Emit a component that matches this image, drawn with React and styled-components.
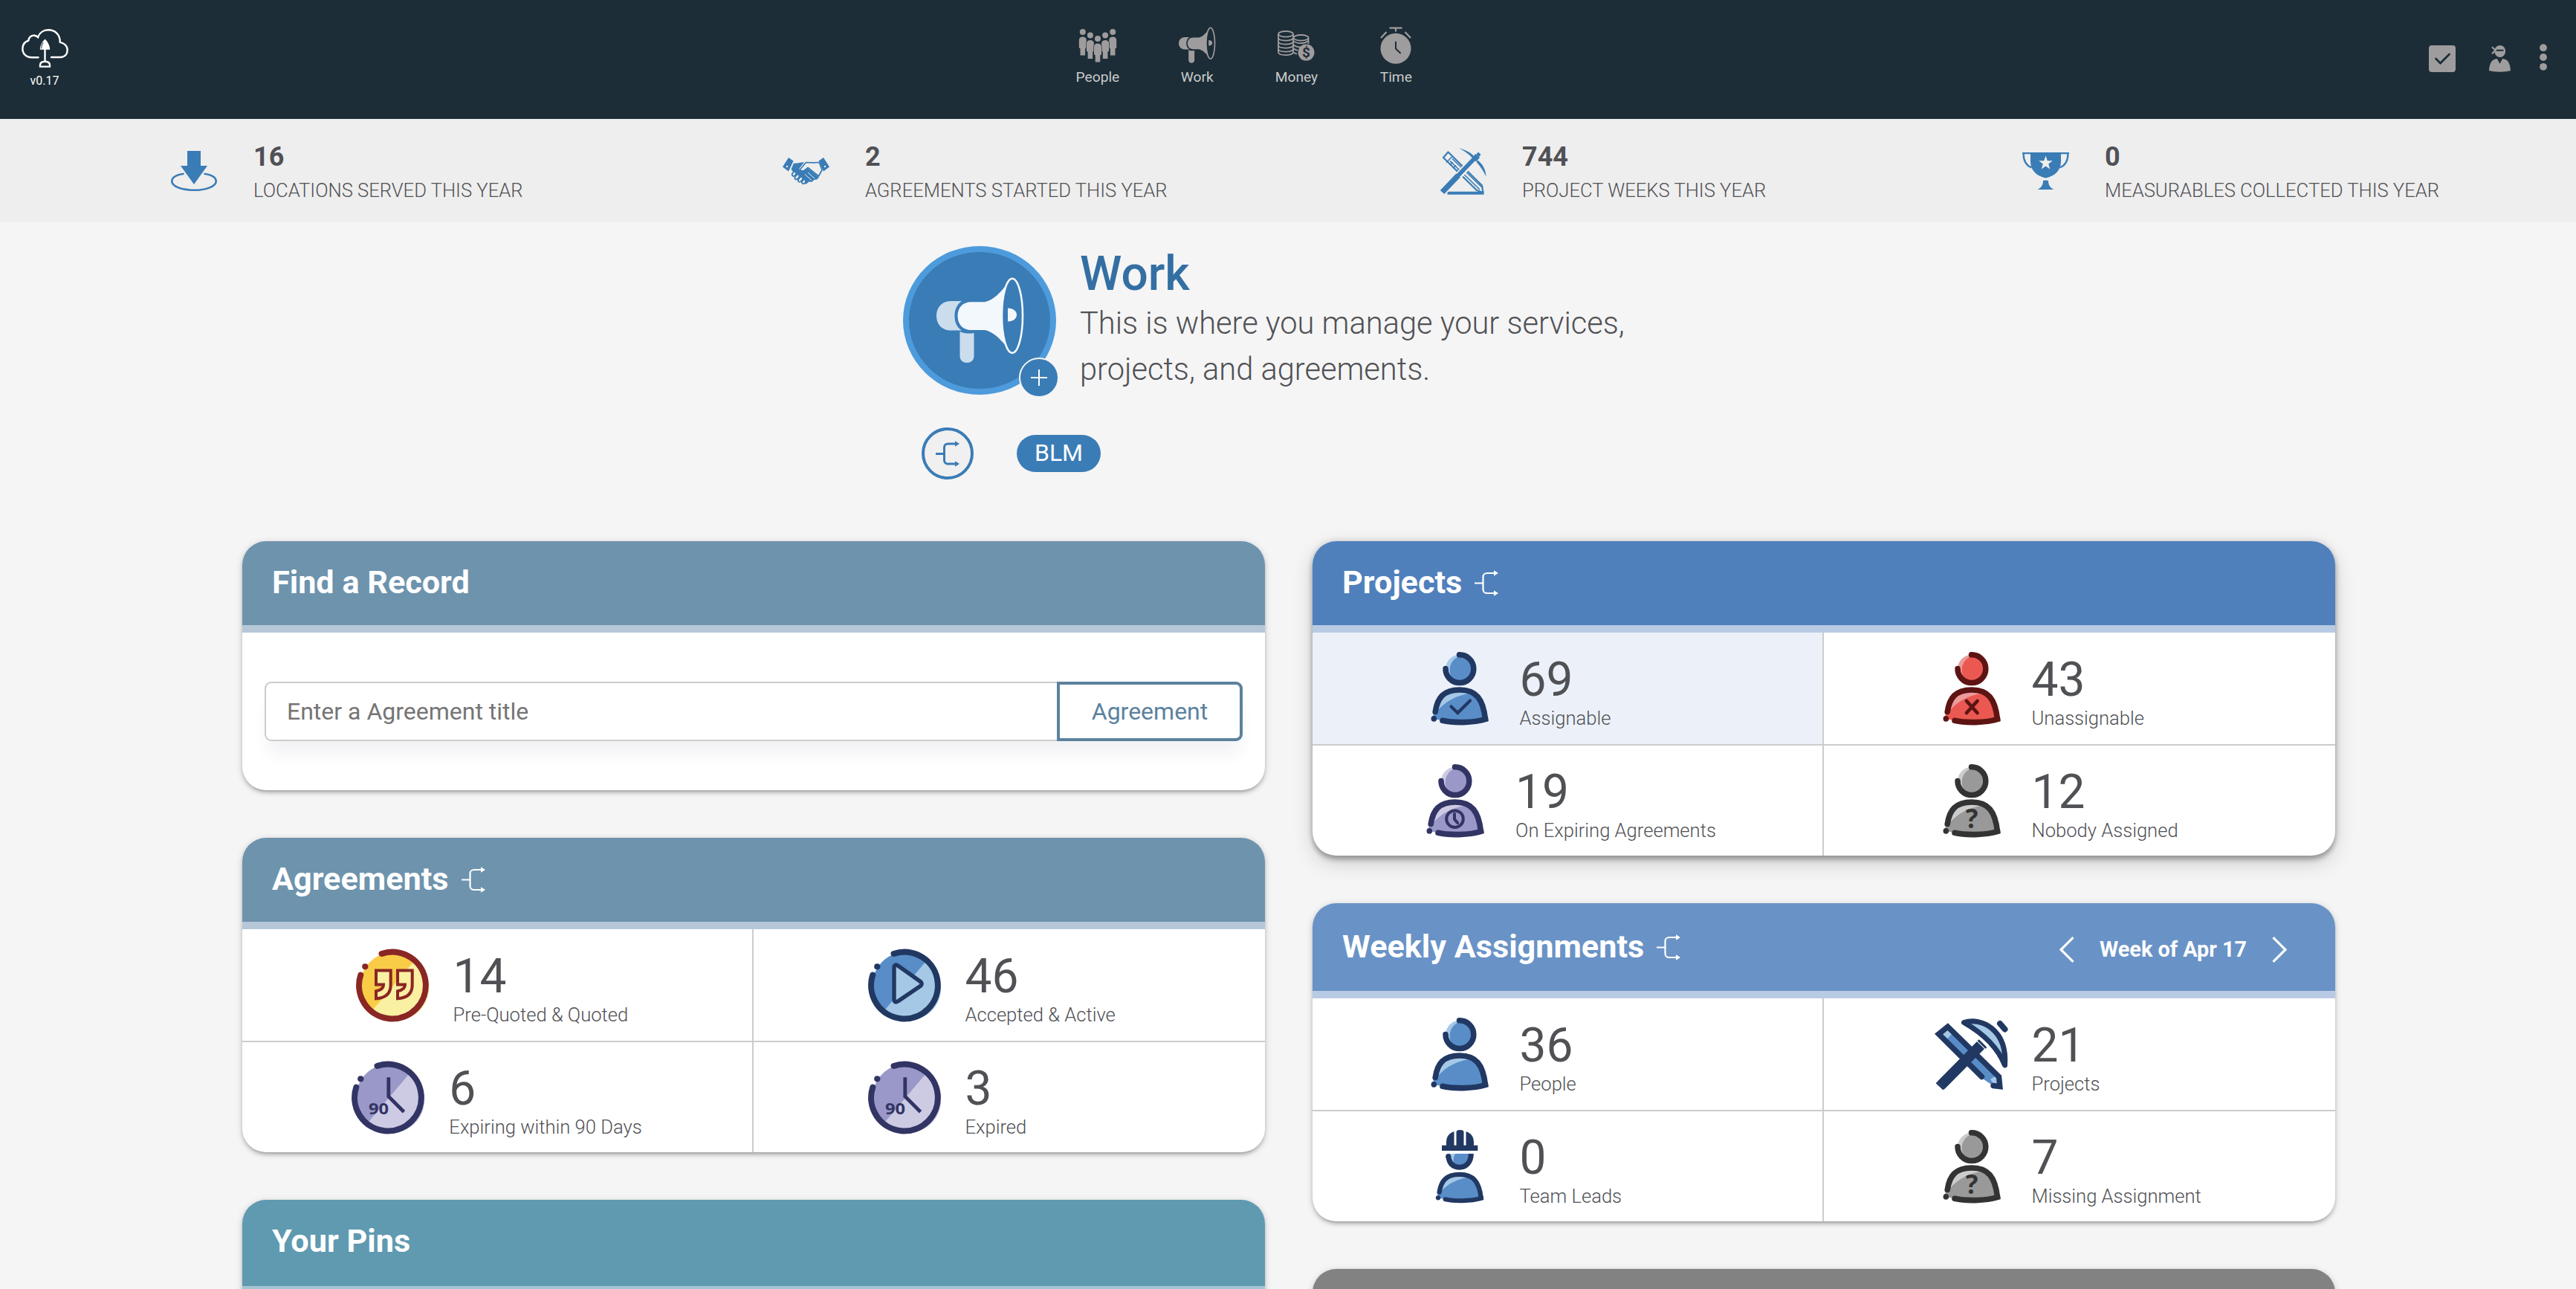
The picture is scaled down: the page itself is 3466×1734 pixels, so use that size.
import React from "react";
import styled, { createGlobalStyle } from "styled-components";

const GlobalStyle = createGlobalStyle`
  *, *::before, *::after { box-sizing: border-box; }
  html, body { margin: 0; padding: 0; background: #f5f5f5; overflow: hidden; }
  body { font-family: Roboto, "Liberation Sans", sans-serif; color: #505155; }
  svg { display: block; overflow: visible; }
`;

const Page = styled.div`
  width: 3466px;
  height: 1734px;
  overflow: hidden;
  background: #f5f5f5;
`;

/* ---------- top bar ---------- */

const TopBar = styled.header`
  display: flex;
  align-items: flex-start;
  height: 160px;
  background: #1c2d37;
`;

const Brand = styled.div`
  display: flex;
  flex-direction: column;
  align-items: center;
  width: 120px;
  padding-top: 39px;
  color: #fff;
  font-size: 16px;
  line-height: 20px;
  gap: 7.5px;
`;

const Nav = styled.nav`
  display: flex;
  margin-left: 1290px;
`;

const NavItem = styled.a`
  display: flex;
  flex-direction: column;
  align-items: center;
  width: 133.8px;
  padding-top: 36px;
  gap: 6px;
  color: #c9cacb;
  font-size: 19.2px;
  line-height: 24px;
`;

const NavIcon = styled.span`
  display: flex;
  align-items: center;
  justify-content: center;
  width: 50px;
  height: 50px;
  color: #9f9c9d;
`;

const Tools = styled.div`
  display: flex;
  align-items: center;
  margin-left: auto;
  padding: 61px 39px 0 0;
  color: #9f9c9d;
`;

const Tool = styled.span`
  display: flex;
  align-items: center;
  height: 36px;
  margin-left: ${(p) => p.$gap || 0}px;
`;

/* ---------- stats ---------- */

const StatsBar = styled.section`
  display: grid;
  grid-template-columns: 823px 884px 784px auto;
  align-items: start;
  height: 139px;
  padding: 29px 0 0 229px;
  background: #eee;
`;

const Stat = styled.div`
  display: flex;
  align-items: center;
  gap: 48px;
`;

const StatIcon = styled.span`
  display: flex;
  align-items: center;
  justify-content: center;
  width: 64px;
  height: 82px;
  color: #3a7cb6;
`;

const StatValue = styled.div`
  font-size: 36px;
  font-weight: 700;
  line-height: 42px;
`;

const StatLabel = styled.div`
  font-size: 25.6px;
  font-weight: 300;
  line-height: 30px;
  padding-top: 9px;
  margin-bottom: -1px;
  white-space: nowrap;
`;

/* ---------- hero ---------- */

const Hero = styled.section`
  display: flex;
  flex-direction: column;
  height: 429px;
  padding: 32px 0 0 1215px;
`;

const HeroTop = styled.div`
  display: flex;
  gap: 32px;
  height: 244px;
`;

const Emblem = styled.div`
  position: relative;
  display: flex;
  width: 206px;
  height: 200px;
  padding: 35px 0 0 37px;
  border: 8px solid #4d9bdc;
  border-radius: 50%;
  background: #3a7cb6;
  color: #f3f8fc;
`;

const AddBadge = styled.button`
  position: absolute;
  right: -12px;
  bottom: -12px;
  display: flex;
  align-items: center;
  justify-content: center;
  width: 54px;
  height: 54px;
  padding: 0;
  border: 2px solid #f5f5f5;
  border-radius: 50%;
  background: #3a7cb6;
`;

const HeroTitle = styled.h1`
  margin: 0;
  padding-top: 1px;
  font-size: 64px;
  font-weight: 500;
  line-height: 74px;
  color: #346fa3;
`;

const HeroText = styled.p`
  margin: -2px 0 0;
  width: 760px;
  font-size: 41.6px;
  font-weight: 300;
  line-height: 62px;
`;

const HeroActions = styled.div`
  display: flex;
  align-items: center;
  gap: 58px;
  padding-left: 25px;
`;

const RoundButton = styled.button`
  display: flex;
  align-items: center;
  justify-content: center;
  width: 70px;
  height: 70px;
  padding: 0;
  border: 4px solid #3a7cb6;
  border-radius: 50%;
  background: #f0f0f0;
  color: #3a7cb6;
`;

const Tag = styled.span`
  width: 113px;
  height: 50px;
  border-radius: 25px;
  background: #3a7cb6;
  color: #fff;
  font-size: 32px;
  line-height: 48px;
  text-align: center;
`;

/* ---------- cards ---------- */

const Columns = styled.main`
  display: flex;
  gap: 64px;
  padding-left: 326px;
`;

const Column = styled.div`
  display: flex;
  flex-direction: column;
  gap: 64px;
  width: 1376px;
`;

const Card = styled.section`
  overflow: hidden;
  flex: none;
  border-radius: 32px;
  background: #fff;
  box-shadow: ${(p) =>
    p.$raised
      ? "0 6px 6px rgba(0,0,0,.24), 0 10px 28px rgba(0,0,0,.16), 0 0 8px rgba(0,0,0,.16)"
      : "0 4px 4px rgba(0,0,0,.13), 0 6px 2px -4px rgba(0,0,0,.1), 0 2px 10px rgba(0,0,0,.18)"};
`;

const CardHeader = styled.header`
  display: flex;
  align-items: flex-start;
  height: ${(p) => p.$height || 123}px;
  padding: ${(p) => p.$top || 31}px 65px 0 40px;
  border-bottom: 10px solid ${(p) => p.$edge};
  background: ${(p) => p.$bg};
  color: #fff;
`;

const CardTitle = styled.h2`
  margin: 0;
  font-size: 43.2px;
  font-weight: 700;
  line-height: 49px;
`;

const TitleFork = styled.span`
  padding: 8px 0 0 17px;
`;

const WeekPicker = styled.div`
  display: flex;
  align-items: center;
  gap: 34px;
  height: 36px;
  margin: 10px 0 0 auto;
  font-size: 28.8px;
  font-weight: 700;
  line-height: 36px;
`;

const SearchBody = styled.div`
  height: 212px;
  padding: 66px 30px 0;
`;

const EmptyBody = styled.div`
  height: 300px;
`;

const SearchRow = styled.div`
  display: flex;
  height: 80px;
  border-radius: 8px;
  box-shadow: 0 22px 22px -6px rgba(50, 60, 93, 0.07);
`;

const SearchInput = styled.input`
  flex: 1;
  min-width: 0;
  padding: 0 28px;
  border: 2px solid #ccc;
  border-right: 0;
  border-radius: 9px 0 0 9px;
  background: transparent;
  font: 400 32px Roboto, sans-serif;
  &::placeholder { color: #757575; opacity: 1; }
`;

const SearchButton = styled.button`
  width: 250px;
  padding: 0;
  border: 4px solid #5b829e;
  border-radius: 0 9px 9px 0;
  background: transparent;
  color: #5b829e;
  font: 400 32px Roboto, sans-serif;
`;

const Grid = styled.div`
  display: grid;
  grid-template-columns: 688px 688px;
  grid-template-rows: 152px 148px;
`;

const Cell = styled.div`
  display: flex;
  align-items: center;
  justify-content: center;
  gap: 32px;
  background: ${(p) => (p.$active ? "#ecf1f9" : "transparent")};
  &:nth-child(odd) { border-right: 2px solid #ccc; }
  &:nth-child(-n + 2) { border-bottom: 2px solid #ccc; }
`;

const CellText = styled.div`
  min-width: ${(p) => p.$min}px;
  white-space: nowrap;
`;

const CellValue = styled.div`
  padding-top: 2px;
  font-size: 64px;
  line-height: 78px;
`;

const CellLabel = styled.div`
  font-size: 25.6px;
  font-weight: 300;
  line-height: 24px;
`;

/* ---------- icons ---------- */

const LogoIcon = () => (
  <svg width="63" height="52" viewBox="0 0 63 52" fill="none" stroke="#fff" strokeWidth="2.4" strokeLinecap="round">
    <path d="M22.5 38.3H14C5.5 38.3 1.3 32.5 1.3 26.5c0-5.500 3.200-9.300 8-11C9.500 11 13.500 8.200 17.500 8.800c2.200.3 3.500 1.200 4.600 2.300C24 5 29.500 1.300 36 1.300c9 0 16 6 15.800 16.500 5.500 1.200 9.900 5 9.900 10.700 0 5.300-3.500 9.500-9.500 9.500H40" />
    <path d="M31.500 27v17" />
    <path d="M31.500 13.500c4 3.800 6.500 8.500 6.800 14.300H24.700c.3-5.800 2.800-10.500 6.800-14.300z" fill="#fff" stroke="none" />
    <path d="M29 18.500c-1.600 2.400-2.200 4.800-2.300 7.500" stroke="#1c2d37" strokeWidth="1" />
    <path d="M25 50.600h13v-2c0-3-2.600-4.800-6.500-4.800S25 45.600 25 48.600z" />
  </svg>
);

const Figure = ({ x, y }) => (
  <g transform={`translate(${x} ${y})`}>
    <circle cx="0" cy="4" r="4" />
    <path d="M-5 15c0-3 2-4.500 5-4.500S5 12 5 15v10l-1.700 1.500V35.500H-3.300V26.500L-5 25z" stroke="#1c2d37" strokeWidth="1.200" paintOrder="stroke" />
  </g>
);

const PeopleIcon = () => (
  <svg width="50" height="45" viewBox="0 0 50 45" fill="currentColor">
    <Figure x={4.8} y={0} />
    <Figure x={45.2} y={0} />
    <Figure x={14.9} y={4.5} />
    <Figure x={35.1} y={4.5} />
    <Figure x={25} y={9} />
  </svg>
);

const Megaphone = ({ width, ground, soft }) => (
  <svg width={width} height={(width * 114) / 117} viewBox="0 0 117 114">
    <g fill="currentColor">
      <g opacity={soft ? 0.79 : 1}>
        <path d="M34 31H20C7 31 0 40 0 51s7 19.500 20 19.500h14C27 66 24.500 59 24.500 51S27 36 34 31z" />
        <path d="M31.500 72c6 3 13 3 19 2v31c0 12-19 12-19 0z" />
      </g>
      <path d="M47 32.300h18C76 30 86 20 94 9v83C86 82 76 72 65 70H47c-12 0-18.500-8-18.500-19S35 32.300 47 32.300z" />
    </g>
    <ellipse cx="102" cy="50.700" rx="14" ry="50" fill={ground} stroke="currentColor" strokeWidth={soft ? 2.6 : 4} />
    <path d="M96 40.500c7 0 12 4 12 9s-5 9-12 9z" fill="currentColor" />
  </svg>
);

const MoneyIcon = () => (
  <svg width="50" height="41" viewBox="0 0 50 41" fill="none" stroke="currentColor" strokeWidth="1.800">
    <ellipse cx="11" cy="4.800" rx="10" ry="3.800" />
    <path d="M1 4.800v24.500c0 5 20 5 20 0V4.800" />
    <path d="M1 9.800c0 5 20 5 20 0M1 14.800c0 5 20 5 20 0M1 19.800c0 5 20 5 20 0M1 24.800c0 5 20 5 20 0" />
    <ellipse cx="31.500" cy="9.800" rx="10" ry="3.800" />
    <path d="M41.500 10v8M21.500 13.500c2 4.500 15 5 19.500.5M21.500 19c1.500 2.500 6 3.500 9 3.200M21.500 24c1 1.500 3 2.500 5.500 2.700M21.500 29c1 1.500 2 2.200 4.500 2.500" />
    <circle cx="38.500" cy="29.600" r="11" fill="currentColor" stroke="none" />
    <text x="38.500" y="36.300" textAnchor="middle" fontFamily="Roboto" fontWeight="700" fontSize="19" fill="#1c2d37" stroke="none">$</text>
  </svg>
);

const TimeIcon = () => (
  <svg width="42" height="50" viewBox="0 0 42 50" fill="none" stroke="currentColor" strokeWidth="2.200">
    <circle cx="21" cy="29.200" r="20.500" fill="currentColor" stroke="none" />
    <path d="M12.500 1.600h17M21 1.600v4.800M1 15l7.500-8M41 15l-7.500-8" />
    <path d="M21 20.500v9l6 5.800" stroke="#1c2d37" strokeLinecap="round" strokeWidth="2" />
  </svg>
);

const CheckBoxIcon = () => (
  <svg width="36" height="36" viewBox="0 0 36 36">
    <rect width="36" height="36" rx="4" fill="currentColor" />
    <path d="M9.500 18l6 6L27.500 12" fill="none" stroke="#1c2d37" strokeWidth="2.800" strokeLinecap="round" />
  </svg>
);

const NinjaIcon = () => (
  <svg width="29" height="36" viewBox="0 0 29 36" fill="currentColor">
    <ellipse cx="14.700" cy="8" rx="7.400" ry="8" />
    <path d="M8.500 6.700L4.600 2.800M8.500 6.700L4.600 10.600" stroke="currentColor" strokeWidth="2.200" strokeLinecap="round" />
    <path d="M10.500 6.700h8.200" stroke="#1c2d37" strokeWidth="2" strokeLinecap="round" />
    <path d="M0 34c.3-7 2.500-13.500 7-15 1.500-.6 2.600-.9 3.800-1l3.700 6.800 3.700-6.800c1.200.1 2.300.4 3.800 1 4.500 1.500 6.700 8 7 15-8 2.300-21 2.300-29 0z" />
  </svg>
);

const DotsIcon = () => (
  <svg width="10" height="36" viewBox="0 0 10 36" fill="currentColor">
    <circle cx="5" cy="3.200" r="4.900" />
    <circle cx="5" cy="16" r="4.900" />
    <circle cx="5" cy="28.800" r="4.900" />
  </svg>
);

const LocationIcon = () => (
  <svg width="64" height="64" viewBox="0 0 64 64">
    <path d="M23 5h18v20h9L32 50 14 25h9z" fill="currentColor" />
    <path d="M18.500 35.700C8 37 2.300 41 2.300 46c0 6.500 13 11.800 29.700 11.800S61.700 52.500 61.700 46c0-5-5.700-9-16.200-10.300" fill="none" stroke="currentColor" strokeWidth="2.600" />
  </svg>
);

const HandshakeIcon = () => (
  <svg width="63" height="37" viewBox="0 0 63 37" fill="currentColor">
    <path d="M8 0l6.500 4.500L8 18.500 0 12.500zM55 0l-6.500 4.500L55 18.500l8-6z" />
    <circle cx="6" cy="12" r="1.200" fill="#eee" />
    <circle cx="57" cy="12" r="1.200" fill="#eee" />
    <path d="M15 7.500c4 .8 8-1 14-1.300l-6.500 8.300c0 4 5 4.300 8 1.500l3-2L49 26.500l-3 3-3.500.3-3 3-4-.2-4 3.200-6-2-4-9-7-5-3-4z" />
    <path d="M24 15.500L31.500 6.500 42 6.800l7-.3M49.500 7l3.500 9.500-4.500 8.500L34 13.500c-2 1.500-4 4.500-7 4.500-3 0-4-1.500-3-2.500" fill="none" stroke="currentColor" strokeWidth="1.700" strokeLinejoin="round" />
    <path d="M34 20l9 8M30 22.500l9 8" stroke="#eee" strokeWidth="1" />
    <g fill="#eee" stroke="currentColor" strokeWidth="1.800">
      <ellipse cx="15.500" cy="22" rx="2.300" ry="3.200" transform="rotate(38 15.500 22)" />
      <ellipse cx="19.500" cy="26" rx="2.300" ry="3.900" transform="rotate(38 19.500 26)" />
      <ellipse cx="24" cy="29.300" rx="2.300" ry="3.900" transform="rotate(38 24 29.300)" />
      <ellipse cx="28.500" cy="32.500" rx="2.100" ry="3" transform="rotate(38 28.500 32.500)" />
    </g>
  </svg>
);

const DraftIcon = () => (
  <svg width="63" height="63" viewBox="0 0 63 63" fill="none" stroke="currentColor" strokeWidth="2.200">
    <path d="M5 13L11.500 5.500 57 50.500 58.500 60 50 57z" strokeLinejoin="round" />
    <path d="M9 19.500l7.500-7.500M14 17.500L54 56M17 14.500L57 53M13.500 23l4-4M18 27.500l4-4M22.500 32l4-4" strokeWidth="1.700" />
    <path d="M10.500 60.800h49" strokeWidth="4" />
    <path d="M47 14.500L7 56.500" stroke="#eee" strokeWidth="10" />
    <path d="M47.500 13.500L24 38" strokeWidth="5.500" />
    <path d="M25 37L3.500 59.500" strokeWidth="7.500" />
    <path d="M43.500 13l5.500 5.500 5-5.500-5.500-5z M49.500 8.500l2.500-3 3.500 3.500-2.500 3z" fill="currentColor" stroke="none" />
    <path d="M26 .3C36 3 42 6.500 46 11l-2 2.500C39 8 33 4 26 .3zM51.500 16.500C58 22 62 29 62.500 38.500 59 31 55 25 49.500 19z" fill="currentColor" stroke="none" />
  </svg>
);

const TrophyIcon = () => (
  <svg width="63" height="50" viewBox="0 0 63 50" fill="currentColor">
    <path d="M0 0h63v2.300H0z" />
    <path d="M11 0h41v12c0 12-8 20-20.500 22.500C19 32 11 24 11 12z" />
    <path d="M1.600 2c0 9.500 3 15.500 11 18.500M61.400 2c0 9.500-3 15.500-11 18.500" fill="none" stroke="currentColor" strokeWidth="2.300" />
    <path d="M31.500 37.500l3.500.5c0 6 2.500 9.500 7.500 12h-22c5-2.500 7.500-6 7.500-12z" />
    <path d="M31.500 4.500l2.300 6.700 7 .1-5.600 4.300 2 6.800-5.700-4-5.700 4 2-6.800-5.600-4.300 7-.1z" fill="#eee" />
  </svg>
);

const ForkIcon = ({ weight = 2.2 }) => (
  <svg width="32" height="35" viewBox="0 0 32 35" fill="none" stroke="currentColor" strokeWidth={weight}>
    <path d="M0 17.500h11M26 4h-8.500C13 4 11.500 5.500 11.500 9.500v16c0 4 1.500 5.500 6 5.500H26" />
    <path d="M26 .3L32 4l-6 3.700zM26 27.300L32 31l-6 3.700z" fill="currentColor" stroke="none" />
  </svg>
);

const Chevron = ({ flip }) => (
  <svg width="20" height="35" viewBox="0 0 20 35" fill="none" stroke="#fff" strokeWidth="3.200">
    <path d={flip ? "M1.500 1.200L18 17.500 1.500 33.800" : "M18.500 1.200L2 17.500 18.500 33.800"} />
  </svg>
);

const tones = {
  blue: { line: "#213862", base: "#588dc8", light: "#a5c8e7" },
  red: { line: "#5d1413", base: "#eb5852", light: "#ea9b9b" },
  violet: { line: "#323464", base: "#9998c8", light: "#cdcae4" },
  gray: { line: "#333333", base: "#999999", light: "#cccccc" },
  amber: { line: "#8a2624", base: "#f9cc48", light: "#f9f0a2" },
};

const Torso = ({ c }) => (
  <>
    <path d="M13 90C15 68 24 51 49 51S80 63 83.500 91C70 95.500 40 96 25 92z" fill={c.base} />
    <path d="M20 78C22 64 31 54 49 54c5 0 9 .7 13 2C44 59 31 66 20 78z" fill={c.light} />
    <path d="M16.200 80.500C19 62 27 51 49 51s31.500 12 34.500 39.500C68 95.500 40 95.800 26 92.300" fill="none" stroke={c.line} strokeWidth="7.600" strokeLinecap="round" />
    <path d="M79.500 88l7.500-1 .6 5.700-7 2.300z" fill={c.line} />
    <ellipse cx="14.300" cy="89.800" rx="3.800" ry="3.900" fill={c.line} />
  </>
);

const marks = {
  check: (c) => <path d="M37.500 73.500l8.800 8.500L63 65.500" fill="none" stroke={c.line} strokeWidth="4.200" strokeLinecap="round" />,
  cross: (c) => <path d="M42 66l14.500 16M56.500 66L42 82" fill="none" stroke={c.line} strokeWidth="4.800" strokeLinecap="round" />,
  clock: (c) => (
    <g fill="none" stroke={c.line}>
      <circle cx="48.500" cy="73.700" r="11.300" strokeWidth="4" />
      <path d="M48 67v7l4.200 5" strokeWidth="4" strokeLinecap="round" />
    </g>
  ),
  question: (c) => (
    <text x="49" y="86" textAnchor="middle" fontFamily="Open Sans" fontWeight="700" fontSize="35" fill={c.line}>?</text>
  ),
};

const PersonIcon = ({ tone, mark }) => {
  const c = tones[tone];
  return (
    <svg width="98" height="98" viewBox="0 0 98 98">
      <circle cx="49" cy="22.500" r="18.800" fill={c.light} />
      <ellipse cx="51.500" cy="23.500" rx="15.800" ry="18" fill={c.base} transform="rotate(12 51.500 23.500)" />
      <path d="M48.500 3.800A18.900 18.900 0 1 1 30 22.500" fill="none" stroke={c.line} strokeWidth="7.500" strokeLinecap="round" />
      <Torso c={c} />
      {mark && marks[mark](c)}
    </svg>
  );
};

const LeadIcon = () => {
  const c = tones.blue;
  return (
    <svg width="98" height="98" viewBox="0 0 98 98">
      <path d="M35 32h28v2c0 22-28 22-28 0z" fill={c.base} />
      <path d="M36 32h7c-2 4-3 7-2 13-4-3-5-8-5-13z" fill={c.light} />
      <path d="M33.700 35.500C35 45 40 50.200 49 50.200S64.300 43 64.300 32" fill="none" stroke={c.line} strokeWidth="7" />
      <circle cx="33.700" cy="35.500" r="3.500" fill={c.line} />
      <path d="M25 20.700h6V17c0-8 4-13 10.500-14.700v18.400h3V2.500C44.500-.8 54.500-.8 54.500 2.500v18.200h3V2.300C64 4 68 9 68 17v3.700h5.300V28H25z" fill={c.line} />
      <g transform="translate(8.080 18.600) scale(.835 .81)">
        <Torso c={c} />
      </g>
    </svg>
  );
};

const PickIcon = () => {
  const c = tones.blue;
  return (
    <svg width="98" height="98" viewBox="0 0 98 98">
      <path d="M4 22L16.700 12 86 79l1 14-10-2L65 83z" fill={c.base} />
      <path d="M9 22l7-6 6 6-6.500 7zM74 83l9-6 4 6v9l-8-2z" fill={c.light} />
      <path d="M62.500 79.500L4.500 22 16.700 12.200 85.500 79.500 86.800 92.500 78 91.500" fill="none" stroke={c.line} strokeWidth="7.400" strokeLinecap="round" strokeLinejoin="miter" />
      <path d="M61 37L7.500 91" stroke={c.line} strokeWidth="14" />
      <path d="M58.500 31l9 9M2.500 88l8 7.500" stroke={c.line} strokeWidth="3" strokeLinecap="round" />
      <path d="M38.500 6.500C62-1 97 16 93.500 64 84 40 64 21 38.500 6.500z" fill={c.light} stroke={c.line} strokeWidth="7" strokeLinejoin="round" />
      <path d="M87 8l6.500 7.500" stroke={c.line} strokeWidth="8" strokeLinecap="round" />
    </svg>
  );
};

const discMarks = {
  quote: (c) => (
    <g fill={c.light} stroke={c.line} strokeWidth="4">
      <path d="M26 29.500h19.700V49C45.700 60 39 66.500 26 67.300v-10C33 56 36 53 36 48.500H26z" />
      <path d="M55 29.500h19.700V49C74.700 60 68 66.500 55 67.300v-10C62 56 65 53 65 48.500H55z" />
    </g>
  ),
  play: (c) => (
    <path d="M34 26c0-4.200 2.500-5 5.500-2.700l29 20.500c3.500 2.500 3.500 4.700 0 7.200L39.500 70.700C36.500 73 34 72 34 68z" fill={c.light} stroke={c.line} strokeWidth="5.400" />
  ),
  ninety: (c) => (
    <>
      <path d="M48.800 22.300V48L69.500 68.700" fill="none" stroke={c.line} strokeWidth="4.800" />
      <text x="22" y="72.300" fontFamily="Open Sans" fontWeight="700" fontSize="22" textLength="27" lengthAdjust="spacingAndGlyphs" fill={c.line}>90</text>
    </>
  ),
};

const DiscIcon = ({ tone, mark }) => {
  const c = tones[tone];
  return (
    <svg width="98" height="98" viewBox="0 0 98 98">
      <circle cx="49" cy="49" r="44" fill={c.base} />
      <path d="M77 17A43 43 0 1 1 22 82z" fill={c.light} />
      <path d="M33.500 7A44.900 44.900 0 1 1 5.300 35.500" fill="none" stroke={c.line} strokeWidth="8" strokeLinecap="round" />
      <circle cx="11.300" cy="24.300" r="4.100" fill={c.line} />
      {discMarks[mark](c)}
    </svg>
  );
};

/* ---------- composition ---------- */

const stats = [
  { icon: <LocationIcon />, value: "16", label: "LOCATIONS SERVED THIS YEAR" },
  { icon: <HandshakeIcon />, value: "2", label: "AGREEMENTS STARTED THIS YEAR" },
  { icon: <DraftIcon />, value: "744", label: "PROJECT WEEKS THIS YEAR" },
  { icon: <TrophyIcon />, value: "0", label: "MEASURABLES COLLECTED THIS YEAR" },
];

const navItems = [
  { icon: <PeopleIcon />, label: "People" },
  { icon: <Megaphone width={49} ground="#1c2d37" />, label: "Work" },
  { icon: <MoneyIcon />, label: "Money" },
  { icon: <TimeIcon />, label: "Time" },
];

const agreements = [
  { icon: <DiscIcon tone="amber" mark="quote" />, value: 14, label: "Pre-Quoted & Quoted" },
  { icon: <DiscIcon tone="blue" mark="play" />, value: 46, label: "Accepted & Active" },
  { icon: <DiscIcon tone="violet" mark="ninety" />, value: 6, label: "Expiring within 90 Days" },
  { icon: <DiscIcon tone="violet" mark="ninety" />, value: 3, label: "Expired" },
];

const projects = [
  { icon: <PersonIcon tone="blue" mark="check" />, value: 69, label: "Assignable", active: true },
  { icon: <PersonIcon tone="red" mark="cross" />, value: 43, label: "Unassignable" },
  { icon: <PersonIcon tone="violet" mark="clock" />, value: 19, label: "On Expiring Agreements" },
  { icon: <PersonIcon tone="gray" mark="question" />, value: 12, label: "Nobody Assigned" },
];

const weekly = [
  { icon: <PersonIcon tone="blue" />, value: 36, label: "People" },
  { icon: <PickIcon />, value: 21, label: "Projects" },
  { icon: <LeadIcon />, value: 0, label: "Team Leads" },
  { icon: <PersonIcon tone="gray" mark="question" />, value: 7, label: "Missing Assignment" },
];

const CountGrid = ({ items, textWidth }) => (
  <Grid>
    {items.map((it) => (
      <Cell key={it.label} $active={it.active}>
        {it.icon}
        <CellText $min={textWidth}>
          <CellValue>{it.value}</CellValue>
          <CellLabel>{it.label}</CellLabel>
        </CellText>
      </Cell>
    ))}
  </Grid>
);

export default function App() {
  return (
    <Page>
      <GlobalStyle />
      <TopBar>
        <Brand>
          <LogoIcon />
          <span>v0.17</span>
        </Brand>
        <Nav>
          {navItems.map((n) => (
            <NavItem key={n.label}>
              <NavIcon>{n.icon}</NavIcon>
              {n.label}
            </NavItem>
          ))}
        </Nav>
        <Tools>
          <Tool><CheckBoxIcon /></Tool>
          <Tool $gap={45}><NinjaIcon /></Tool>
          <Tool $gap={39}><DotsIcon /></Tool>
        </Tools>
      </TopBar>

      <StatsBar>
        {stats.map((s) => (
          <Stat key={s.label}>
            <StatIcon>{s.icon}</StatIcon>
            <div>
              <StatValue>{s.value}</StatValue>
              <StatLabel>{s.label}</StatLabel>
            </div>
          </Stat>
        ))}
      </StatsBar>

      <Hero>
        <HeroTop>
          <Emblem>
            <Megaphone width={117} ground="#3a7cb6" soft />
            <AddBadge aria-label="Add">
              <svg width="22" height="22" viewBox="0 0 22 22" stroke="#fff" strokeWidth="2">
                <path d="M11 0v22M0 11h22" />
              </svg>
            </AddBadge>
          </Emblem>
          <div>
            <HeroTitle>Work</HeroTitle>
            <HeroText>This is where you manage your services, projects, and agreements.</HeroText>
          </div>
        </HeroTop>
        <HeroActions>
          <RoundButton aria-label="Flow"><ForkIcon weight={3} /></RoundButton>
          <Tag>BLM</Tag>
        </HeroActions>
      </Hero>

      <Columns>
        <Column>
          <Card>
            <CardHeader $bg="#6e93ad" $edge="#b6c8d8">
              <CardTitle>Find a Record</CardTitle>
            </CardHeader>
            <SearchBody>
              <SearchRow>
                <SearchInput placeholder="Enter a Agreement title" />
                <SearchButton>Agreement</SearchButton>
              </SearchRow>
            </SearchBody>
          </Card>
          <Card>
            <CardHeader $bg="#6e93ad" $edge="#b6c8d8">
              <CardTitle>Agreements</CardTitle>
              <TitleFork><ForkIcon /></TitleFork>
            </CardHeader>
            <CountGrid items={agreements} textWidth={249} />
          </Card>
          <Card>
            <CardHeader $bg="#5f9ab1" $edge="#a4c5d4" $height={126}>
              <CardTitle>Your Pins</CardTitle>
            </CardHeader>
            <EmptyBody />
          </Card>
        </Column>
        <Column>
          <Card $raised>
            <CardHeader $bg="#4f80bb" $edge="#b9cbe4">
              <CardTitle>Projects</CardTitle>
              <TitleFork><ForkIcon /></TitleFork>
            </CardHeader>
            <CountGrid items={projects} textWidth={259} />
          </Card>
          <Card>
            <CardHeader $bg="#6993c6" $edge="#b9cbe4" $height={128} $top={34}>
              <CardTitle>Weekly Assignments</CardTitle>
              <TitleFork><ForkIcon /></TitleFork>
              <WeekPicker>
                <Chevron />
                <span>Week of Apr 17</span>
                <Chevron flip />
              </WeekPicker>
            </CardHeader>
            <CountGrid items={weekly} textWidth={259} />
          </Card>
          <Card>
            <CardHeader $bg="#828282" $edge="#c2c2c2" />
            <EmptyBody />
          </Card>
        </Column>
      </Columns>
    </Page>
  );
}
